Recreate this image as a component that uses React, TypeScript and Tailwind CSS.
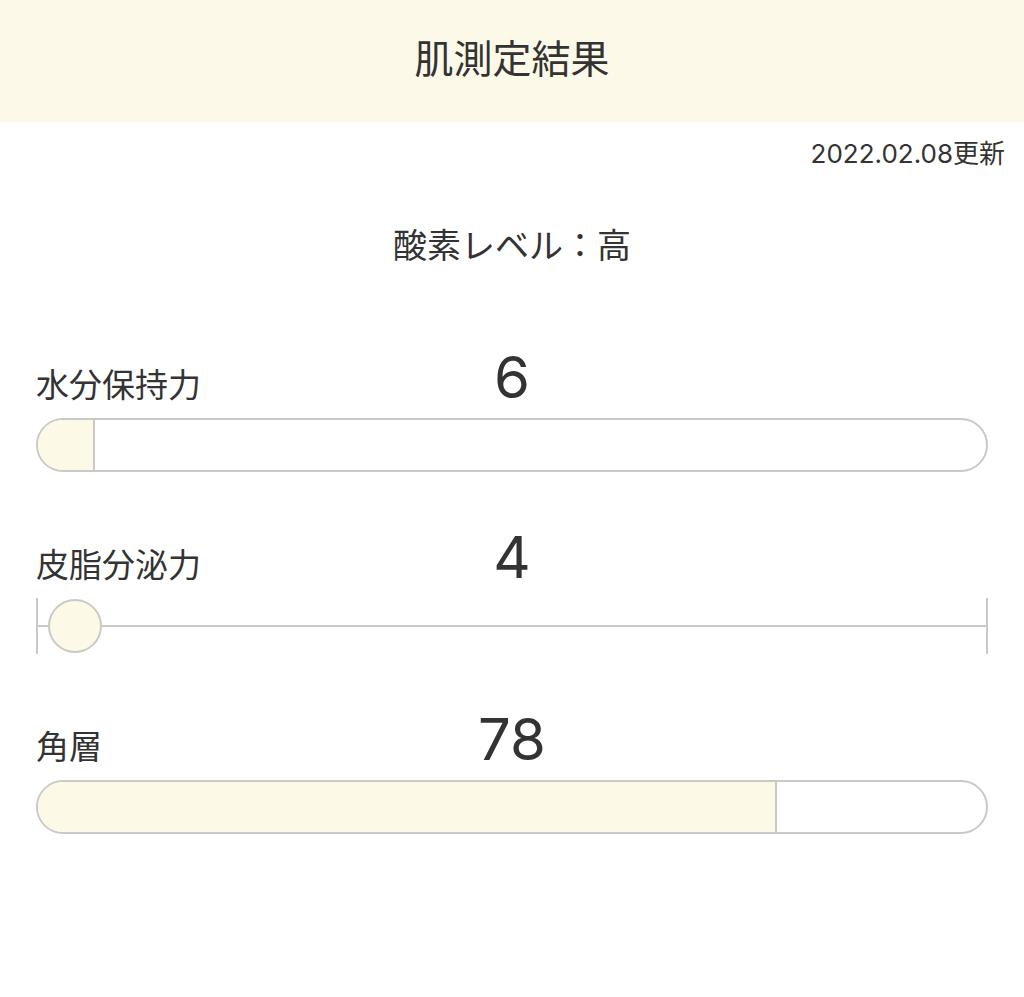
import React from "react";

const font = { fontFamily: '"Noto Sans CJK JP", "Noto Sans", sans-serif' };
const digits = { fontFamily: 'Inter, "Noto Sans CJK JP", sans-serif' };

function Bar({ value }: { value: number }) {
  return (
    <div className="h-[54px] rounded-full border-2 border-[#cbc9c6] bg-white overflow-hidden flex">
      <div className="h-full bg-[#fdf9e7] border-r-2 border-[#cbc9c6]" style={{ width: `${value}%` }} />
    </div>
  );
}

function Slider({ value }: { value: number }) {
  return (
    <div className="relative h-[56px] flex items-center">
      <div className="w-[2px] h-full bg-[#cbc9c6]" />
      <div className="flex-1 h-[2px] bg-[#cbc9c6]" />
      <div className="w-[2px] h-full bg-[#cbc9c6]" />
      <div
        className="absolute top-[1px] w-[54px] h-[54px] rounded-full border-2 border-[#cbc9c6] bg-[#fdf9e7]"
        style={{ left: `calc(${value}% - 27px + 1px)` }}
      />
    </div>
  );
}

function Row({ label, value, kind }: { label: string; value: number; kind: "bar" | "slider" }) {
  return (
    <div className="flex flex-col">
      <div className="grid grid-cols-[1fr_auto_1fr] items-end h-[58px]">
        <div className="text-[33px] leading-none mb-[6px] text-[#333]">{label}</div>
        <div className="text-[58px] leading-none text-[#333]" style={digits}>
          {value}
        </div>
        <div />
      </div>
      <div className="mt-[12px]">{kind === "bar" ? <Bar value={value} /> : <Slider value={value} />}</div>
    </div>
  );
}

export default function App() {
  return (
    <div className="w-[1024px] min-h-[997px] bg-white text-[#333]" style={font}>
      <div className="h-[122px] bg-[#fdf9e8] flex items-center justify-center pb-[10px]">
        <h1 className="text-[39px] font-normal leading-none">肌測定結果</h1>
      </div>
      <div className="h-[64px] flex items-center justify-end pr-[19px]">
        <span className="text-[26px] leading-none" style={digits}>
          2022.02.08更新
        </span>
      </div>
      <div className="mt-[32px] h-[52px] flex items-center justify-center">
        <span className="text-[34px] leading-none">酸素レベル：高</span>
      </div>
      <div className="px-[36px] pt-[78px] flex flex-col gap-[56px]">
        <Row label="水分保持力" value={6} kind="bar" />
        <Row label="皮脂分泌力" value={4} kind="slider" />
        <Row label="角層" value={78} kind="bar" />
      </div>
    </div>
  );
}
